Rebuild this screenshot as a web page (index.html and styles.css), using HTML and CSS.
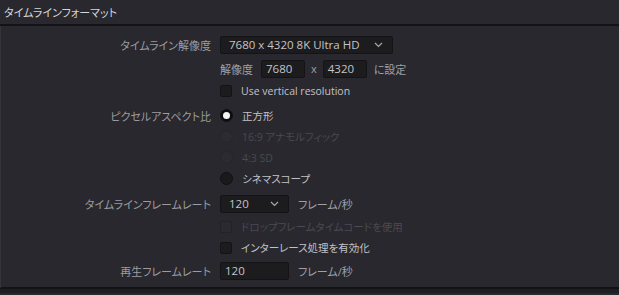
FILE: index.html
```html
<!DOCTYPE html>
<html>
<head>
    <meta charset="UTF-8">
    <title>タイムラインフォーマット</title>
    <link rel="stylesheet" href="styles.css">
</head>
<body>
    <div class="header">タイムラインフォーマット</div>

    <div class="panel">
        <div class="row">
            <div class="label">タイムライン解像度</div>
            <div class="field">
                <div class="select select-wide">
                    <span>7680 x 4320 8K Ultra HD</span>
                    <svg class="chevron" width="9" height="6" viewBox="0 0 9 6"><path d="M1 1 L4.5 4.5 L8 1" fill="none" stroke="#a8a8ac" stroke-width="1.2"/></svg>
                </div>
            </div>
        </div>

        <div class="row gap-3">
            <div class="label"></div>
            <div class="field">
                <span class="text">解像度</span>
                <div class="input input-small">7680</div>
                <span class="text times">x</span>
                <div class="input input-small">4320</div>
                <span class="text set">に設定</span>
            </div>
        </div>

        <div class="row gap-1">
            <div class="label"></div>
            <div class="field">
                <div class="checkbox"></div>
                <span class="option">Use vertical resolution</span>
            </div>
        </div>

        <div class="row gap-4">
            <div class="label">ピクセルアスペクト比</div>
            <div class="field">
                <div class="radio checked"></div>
                <span class="option">正方形</span>
            </div>
        </div>

        <div class="row">
            <div class="label"></div>
            <div class="field">
                <div class="radio disabled"></div>
                <span class="option disabled-text">16:9 アナモルフィック</span>
            </div>
        </div>

        <div class="row">
            <div class="label"></div>
            <div class="field">
                <div class="radio disabled"></div>
                <span class="option disabled-text">4:3 SD</span>
            </div>
        </div>

        <div class="row">
            <div class="label"></div>
            <div class="field">
                <div class="radio"></div>
                <span class="option">シネマスコープ</span>
            </div>
        </div>

        <div class="row gap-4">
            <div class="label">タイムラインフレームレート</div>
            <div class="field">
                <div class="select select-narrow">
                    <span>120</span>
                    <svg class="chevron" width="9" height="6" viewBox="0 0 9 6"><path d="M1 1 L4.5 4.5 L8 1" fill="none" stroke="#a8a8ac" stroke-width="1.2"/></svg>
                </div>
                <span class="text unit">フレーム/秒</span>
            </div>
        </div>

        <div class="row gap-2">
            <div class="label"></div>
            <div class="field">
                <div class="checkbox disabled"></div>
                <span class="option disabled-text">ドロップフレームタイムコードを使用</span>
            </div>
        </div>

        <div class="row">
            <div class="label"></div>
            <div class="field">
                <div class="checkbox"></div>
                <span class="option">インターレース処理を有効化</span>
            </div>
        </div>

        <div class="row gap-2">
            <div class="label">再生フレームレート</div>
            <div class="field">
                <div class="input input-narrow">120</div>
                <span class="text unit">フレーム/秒</span>
            </div>
        </div>
    </div>
    <div class="footer"></div>
</body>
</html>
```

FILE: styles.css
```css
* {
    margin: 0;
    padding: 0;
    box-sizing: border-box;
}

body {
    font-family: 'Open Sans', 'Noto Sans CJK JP', sans-serif;
    font-feature-settings: "palt";
    background: #28282e;
    color: #a4a4a8;
    width: 619px;
    height: 295px;
    overflow: hidden;
    font-size: 11px;
}

.header {
    height: 26px;
    padding-left: 4px;
    display: flex;
    align-items: center;
    font-size: 11px;
    color: #d6d6d8;
    border-bottom: 2px solid #131316;
}

.panel {
    height: 263px;
    padding-top: 8px;
    border-left: 1px solid #34343a;
    border-bottom: 2px solid #131316;
}

.footer {
    height: 4px;
    background: #1e1e22;
}

.row {
    display: grid;
    grid-template-columns: 210px 1fr;
    column-gap: 9px;
    height: 21px;
    align-items: center;
}

.gap-1 { margin-top: 1px; }
.gap-2 { margin-top: 2px; }
.gap-3 { margin-top: 3px; }
.gap-4 { margin-top: 4px; }

.label {
    text-align: right;
    color: #9c9ca0;
    white-space: nowrap;
}

.field {
    display: flex;
    align-items: center;
    white-space: nowrap;
}

.select,
.input {
    height: 18px;
    background: #1c1c1f;
    border: 1px solid #141416;
    border-radius: 2px;
    display: flex;
    align-items: center;
    color: #c4c4c8;
}

.select {
    justify-content: space-between;
    padding: 0 9px 0 8px;
    font-size: 11.5px;
}

.select-wide {
    width: 173px;
}

.select-narrow {
    width: 69px;
}

.chevron {
    display: block;
}

.input {
    padding-left: 4px;
    font-size: 11.5px;
}

.input-small {
    width: 44px;
}

.input-narrow {
    width: 69px;
}

.text {
    color: #a0a0a4;
}

.field > .text:first-child {
    margin-right: 8px;
}

.times {
    margin: 0 6px;
}

.set {
    margin-left: 7px;
}

.unit {
    margin-left: 9px;
}

.option {
    margin-left: 9px;
    font-size: 10.5px;
    color: #c2c2c6;
}

.disabled-text {
    color: #4a4a50;
}

.checkbox {
    width: 12px;
    height: 12px;
    background: #1c1c1f;
    border: 1px solid #141416;
    border-radius: 2px;
}

.checkbox.disabled {
    background: #2a2a30;
    border-color: #232327;
}

.radio {
    width: 13px;
    height: 13px;
    border-radius: 50%;
    background: #1a1a1d;
    border: 1px solid #111113;
    display: flex;
    align-items: center;
    justify-content: center;
}

.radio.checked {
    background: #0e0e10;
}

.radio.checked::after {
    content: '';
    width: 7px;
    height: 7px;
    border-radius: 50%;
    background: #f4f4f4;
}

.radio.disabled {
    background: #2b2b31;
    border-color: #25252a;
}
```
